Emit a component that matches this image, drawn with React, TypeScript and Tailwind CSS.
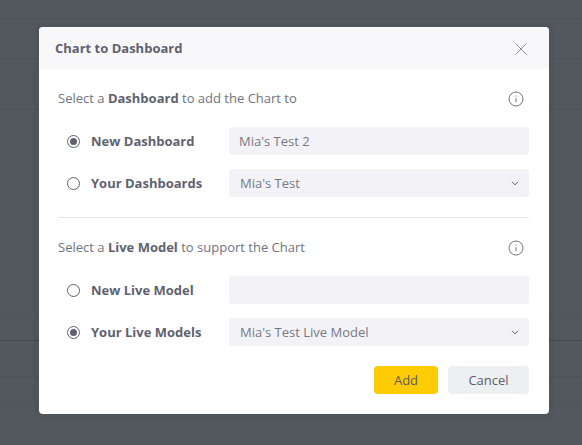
import React from 'react';

const Radio = ({ checked }: { checked: boolean }) => (
  <span className="flex h-[13px] w-[13px] shrink-0 items-center justify-center rounded-full border border-[#5f626e] bg-white">
    {checked && <span className="h-[7px] w-[7px] rounded-full bg-[#5f626e]" />}
  </span>
);

const InfoIcon = () => (
  <svg width="16" height="16" viewBox="0 0 16 16" fill="none" stroke="#5f626a" strokeWidth="0.9">
    <circle cx="8" cy="8" r="7" />
    <path d="M8 7.2v4" />
    <path d="M8 4.6v1" />
  </svg>
);

const Chevron = () => (
  <svg width="8" height="5" viewBox="0 0 8 5" fill="none" stroke="#6a6d76" strokeWidth="1">
    <path d="M.8.8 4 3.8 7.2.8" />
  </svg>
);

const Row = ({ label, checked, value, select }: { label: string; checked: boolean; value: string; select?: boolean }) => (
  <div className="flex h-7 items-center pl-[9px]">
    <Radio checked={checked} />
    <span className="ml-[11px] w-[138px] pt-px text-[13px] font-bold text-[#5f626e]">{label}</span>
    <div className={`flex h-7 flex-1 items-center justify-between rounded-[3px] bg-[#f3f3f7] pr-[10px] pt-px text-[13px] text-[#767985] ${select ? 'pl-[11px]' : 'pl-[10px]'}`}>
      <span>{value}</span>
      {select && <Chevron />}
    </div>
  </div>
);

const Prompt = ({ strong, before, after }: { strong: string; before: string; after: string }) => (
  <div className="flex h-5 items-center justify-between pr-[5px]">
    <span className="text-[13px] text-[#70737c]">
      {before} <b className="font-bold text-[#5f626e]">{strong}</b> {after}
    </span>
    <InfoIcon />
  </div>
);

export default function App() {
  return (
    <div className="relative h-[445px] w-[582px] overflow-hidden bg-[#53575e] font-['Open_Sans',sans-serif]">
      {/* dimmed page behind the modal */}
      <div className="flex flex-col">
        <div className="h-[19px] border-b border-[#4e5259]" />
        <div className="h-[40px] border-b border-[#4e5259]" />
        <div className="h-[51px] border-b border-[#4e5259]" />
        <div className="h-[209px] border-b border-[#4e5259]" />
        <div className="h-[22px] border-b border-[#44474e]" />
        <div className="h-[36px] border-b border-[#4e5259]" />
        <div className="h-[25px] border-b border-[#4e5259]" />
      </div>

      <div className="absolute left-[39px] top-[27px] flex h-[387px] w-[510px] flex-col overflow-hidden rounded-[4px] bg-white shadow-[0_0_0_5px_rgba(0,0,0,0.03)]">
        <div className="flex h-[42px] shrink-0 items-center justify-between bg-[#f8f8fb] pl-4 pr-[22px]">
          <span className="pt-0.5 text-[13px] font-bold text-[#5f626e]">Chart to Dashboard</span>
          <svg className="mt-px" width="12" height="12" viewBox="0 0 12 12" fill="none" stroke="#8b8d95" strokeWidth="1">
            <path d="M.3.3l11.4 11.4M11.7.3.3 11.7" />
          </svg>
        </div>

        <div className="flex flex-1 flex-col pl-[19px] pr-5">
          <div className="mt-5">
            <Prompt before="Select a" strong="Dashboard" after="to add the Chart to" />
          </div>
          <div className="mt-[18px] flex flex-col gap-[14px]">
            <Row label="New Dashboard" checked value="Mia's Test 2" />
            <Row label="Your Dashboards" checked={false} value="Mia's Test" select />
          </div>

          <div className="mt-5 h-px bg-[#e8e8ec]" />

          <div className="mt-5">
            <Prompt before="Select a" strong="Live Model" after="to support the Chart" />
          </div>
          <div className="mt-[18px] flex flex-col gap-[14px]">
            <Row label="New Live Model" checked={false} value="" />
            <Row label="Your Live Models" checked value="Mia's Test Live Model" select />
          </div>

          <div className="mt-5 flex justify-end gap-[10px]">
            <button className="h-7 w-16 rounded-[4px] bg-[#ffcb05] pt-px text-[13px] text-[#5a5c60]">Add</button>
            <button className="h-7 w-[81px] rounded-[4px] bg-[#eeeff3] pt-px text-[13px] text-[#5a5d66]">Cancel</button>
          </div>
        </div>
      </div>
    </div>
  );
}
